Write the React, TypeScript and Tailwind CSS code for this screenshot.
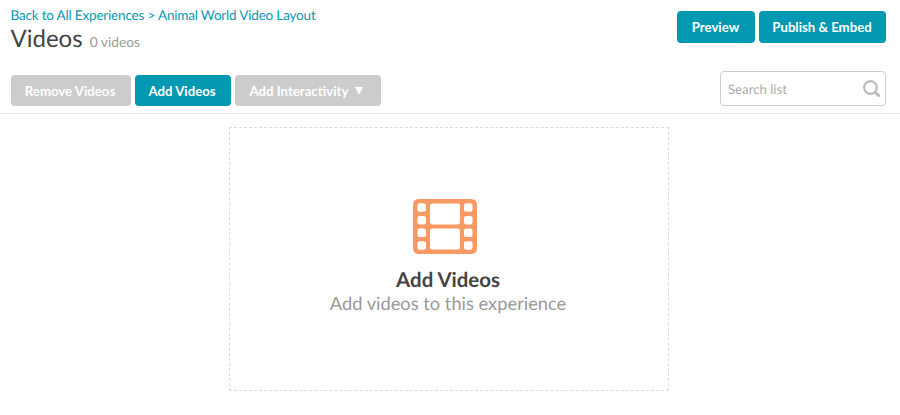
import React from 'react';

const button = 'flex items-center justify-center rounded pt-[2px] pr-[1px] text-[13.2px] font-bold text-white';

function FilmIcon() {
  return (
    <svg className="mr-[6px]" width="64" height="55" viewBox="0 0 64 55" fill="#f99963" fillRule="evenodd">
      <path d="M6 0H58Q64 0 64 6V49Q64 55 58 55H6Q0 55 0 49V6Q0 0 6 0ZM19.5 4.5Q17 4.5 17 7V23Q17 25.5 19.5 25.5H44.5Q47 25.5 47 23V7Q47 4.5 44.5 4.5ZM19.5 29.5Q17 29.5 17 32V48Q17 50.5 19.5 50.5H44.5Q47 50.5 47 48V32Q47 29.5 44.5 29.5Z" />
      {[4.3, 17, 29.6, 42.3].map((y) => (
        <React.Fragment key={y}>
          <rect x="4.5" y={y} width="8.5" height="8.4" rx="2.2" fill="white" />
          <rect x="51" y={y} width="8.5" height="8.4" rx="2.2" fill="white" />
        </React.Fragment>
      ))}
    </svg>
  );
}

export default function App() {
  return (
    <div className="h-[415px] w-[900px] overflow-hidden bg-white font-['Lato',sans-serif] text-[#444] [text-rendering:geometricPrecision]">
      <header className="flex h-[114px] flex-col justify-between border-b border-[#eaeaea] pr-[14px] pb-[7px] pl-[10.5px]">
        <div className="flex items-start justify-between">
          <div className="pt-[7px]">
            <nav className="text-[13.5px] leading-[17px] tracking-[-0.18px] text-[#0799b2]">
              <a>Back to All Experiences</a> <span>&gt;</span> <a>Animal World Video Layout</a>
            </nav>
            <h1 className="flex items-baseline gap-[7px] text-2xl leading-[29px]">
              Videos <span className="text-[13.8px] text-[#999]">0 videos</span>
            </h1>
          </div>
          <div className="flex gap-1 pt-[10.5px]">
            <button className={`${button} h-8 w-[78px] bg-[#0399b2]`}>Preview</button>
            <button className={`${button} h-8 w-[127px] bg-[#0399b2]`}>Publish &amp; Embed</button>
          </div>
        </div>
        <div className="flex items-end justify-between">
          <div className="flex gap-[4px]">
            <button className={`${button} h-[31px] w-[120px] bg-[#ccc]`}>Remove Videos</button>
            <button className={`${button} h-[31px] w-[96px] bg-[#0399b2]`}>Add Videos</button>
            <button className={`${button} h-[31px] w-[146px] gap-[7px] bg-[#ccc]`}>
              Add Interactivity
              <svg className="-mt-px mr-px" width="8" height="8" viewBox="0 0 8 8" fill="white"><path d="M0 0h8L4 8Z" /></svg>
            </button>
          </div>
          <div className="flex h-[35px] w-[166px] items-center justify-between rounded border border-[#ccc] pr-[5px] pl-[7px]">
            <span className="pt-[2px] text-[13.2px] text-[#aaa]">Search list</span>
            <svg width="17" height="17" viewBox="0 0 17 17" fill="none" stroke="#bbb" strokeWidth="2.2">
              <circle cx="7.5" cy="7.5" r="6.3" />
              <path d="m12.3 12.3 3.2 3.2" strokeWidth="3" strokeLinecap="round" />
            </svg>
          </div>
        </div>
      </header>
      <main className="mt-[13px] ml-[229px] flex h-[264px] w-[440px] flex-col items-center border border-dashed border-[#ddd] pt-[71px] pr-[2px]">
        <FilmIcon />
        <h2 className="mt-[14px] text-[20.4px] leading-6 font-bold">Add Videos</h2>
        <p className="text-[18.3px] leading-[23px] text-[#999]">Add videos to this experience</p>
      </main>
    </div>
  );
}
